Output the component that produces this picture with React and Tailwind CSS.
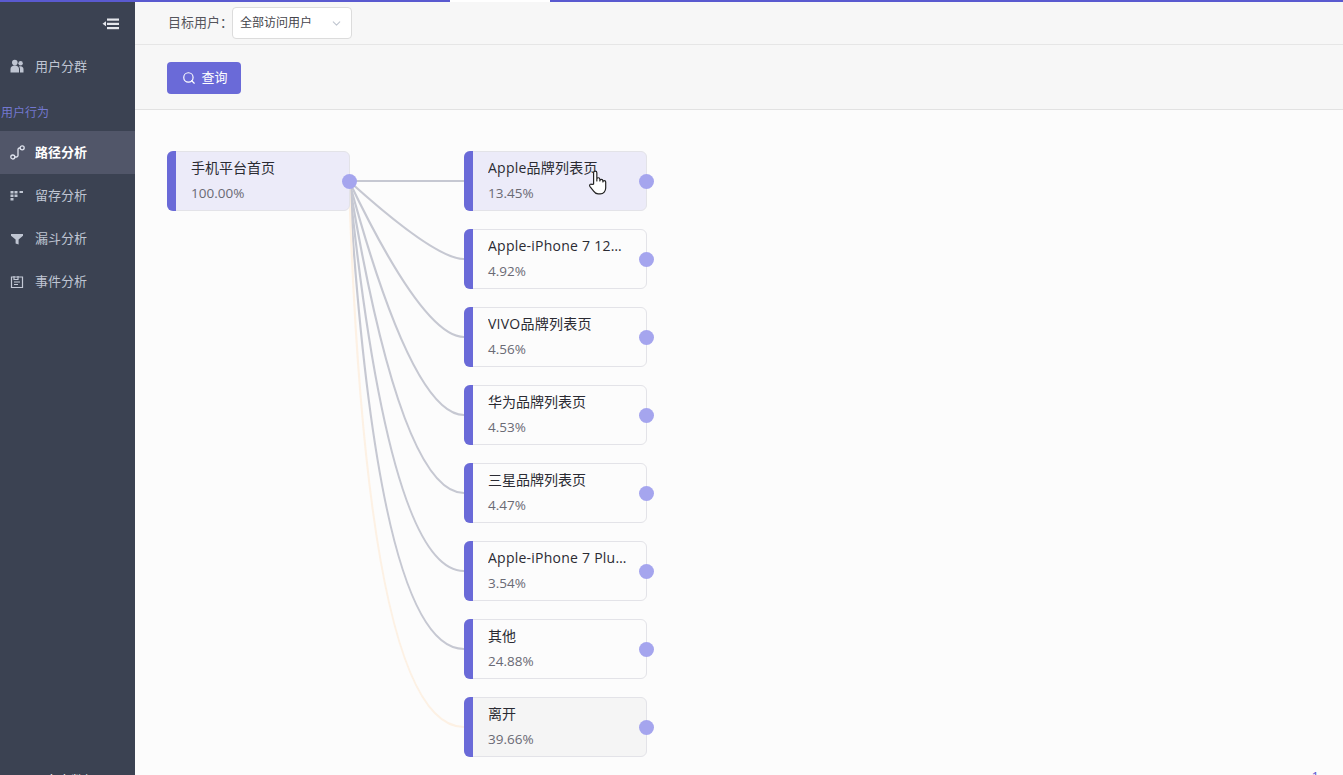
import { ChevronDown, Search } from 'lucide-react';

const font = { fontFamily: '"Open Sans", "Noto Sans CJK SC", sans-serif' };

const menu = [
  { label: '路径分析', icon: 'route', active: true },
  { label: '留存分析', icon: 'grid' },
  { label: '漏斗分析', icon: 'funnel' },
  { label: '事件分析', icon: 'event' },
];

const targets = [
  { title: 'Apple品牌列表页', pct: '13.45%', bg: 'bg-[#ecebf9]' },
  { title: 'Apple-iPhone 7 128GB 黑色', pct: '4.92%', bg: 'bg-[#fcfcfc]' },
  { title: 'VIVO品牌列表页', pct: '4.56%', bg: 'bg-[#fcfcfc]' },
  { title: '华为品牌列表页', pct: '4.53%', bg: 'bg-[#fcfcfc]' },
  { title: '三星品牌列表页', pct: '4.47%', bg: 'bg-[#fcfcfc]' },
  { title: 'Apple-iPhone 7 Plus 128GB', pct: '3.54%', bg: 'bg-[#fcfcfc]' },
  { title: '其他', pct: '24.88%', bg: 'bg-[#fcfcfc]' },
  { title: '离开', pct: '39.66%', bg: 'bg-[#f5f5f5]' },
];

function MenuIcon({ name }) {
  if (name === 'users') {
    return (
      <svg width="14" height="15" viewBox="0 0 14 15" fill="#bfc5d2">
        <circle cx="4.800" cy="3.600" r="2.800" />
        <circle cx="10.600" cy="4.200" r="2.200" />
        <path d="M.5 13.500V10c0-2.200 1.800-3.500 4.300-3.500S9 7.800 9 10v3.500z" />
        <path d="M10 13.500h3.500v-3.200c0-1.600-1.100-3-3-3-.6 0-1.100.1-1.500.3.700.7 1 1.500 1 2.400z" />
      </svg>
    );
  }
  if (name === 'route') {
    return (
      <svg width="15" height="15" viewBox="0 0 15 15" fill="none" stroke="#dfe3ee" strokeWidth="1.300">
        <circle cx="2.800" cy="12" r="2" />
        <circle cx="12.200" cy="2.800" r="2" />
        <path d="M4.800 12H6.500C7.500 12 8 11.500 8 10.500V4.500C8 3.500 8.500 3 9.500 3H10.200" />
      </svg>
    );
  }
  if (name === 'grid') {
    return (
      <svg width="14" height="14" viewBox="0 0 14 14" fill="#bfc5d2">
        <rect x="0.500" y="2" width="3" height="2.500" />
        <rect x="4.500" y="2" width="3" height="2.500" />
        <rect x="9.500" y="2" width="3.500" height="2" />
        <rect x="0.500" y="5.500" width="3" height="2.500" />
        <rect x="4.500" y="5.500" width="3" height="2.500" />
        <rect x="0.500" y="9" width="3" height="2.500" />
      </svg>
    );
  }
  if (name === 'funnel') {
    return (
      <svg width="14" height="14" viewBox="0 0 14 14" fill="#bfc5d2">
        <path d="M1 2h12v1.800L8.600 7.500v5L5.600 11.500V7.500L1 3.800z" />
      </svg>
    );
  }
  return (
    <svg width="14" height="14" viewBox="0 0 14 14" fill="none" stroke="#c4c9d6" strokeWidth="1.200">
      <path d="M1.500 2h11v10.500h-11z" />
      <path d="M4 1v3.500h4V1M4 7h6M4 9.500h4" />
    </svg>
  );
}

function Node({ title, pct, bg }) {
  const latin = /[a-z]/i.test(title);
  return (
    <div className={`relative flex h-[60px] w-[183px] shrink-0 rounded-[6px] border border-[#e3e3e8] ${bg}`}>
      <div className="-my-px -ml-px w-[9px] shrink-0 rounded-l-[6px] bg-[#6a6ad8]" />
      <div className="min-w-0 flex-1 pl-[15px] pr-[18px] pt-[5px]">
        <div className={`truncate text-[14px] leading-[22px] text-[#2b2b33] ${latin ? 'tracking-[0.24px]' : ''}`}>{title}</div>
        <div className="mt-[3px] text-[13.500px] leading-[22px] text-[#6a6a74]">{pct}</div>
      </div>
      <span className="absolute right-[-8px] top-[21.500px] h-[15px] w-[15px] rounded-full bg-[#a5a5ee]" />
    </div>
  );
}

function Edges() {
  const x0 = 182;
  const y0 = 30;
  const x1 = 297;
  return (
    <svg className="absolute left-0 top-0" width="500" height="640" fill="none">
      {targets.map((t, i) => {
        const y = 30 + i * 78;
        // the further down the target, the closer the bend sits to the source
        const cx = x0 + 115 * (0.85 - 0.1 * i);
        return (
          <path
            key={t.pct}
            d={i === 0 ? `M${x0} ${y0}H${x1}` : `M${x0} ${y0}Q${cx} ${y} ${x1} ${y}`}
            stroke={i === 7 ? '#fdf1e4' : '#c6c8d2'}
            strokeWidth="2.200"
          />
        );
      })}
    </svg>
  );
}

export default function App() {
  return (
    <div className="flex h-screen w-full overflow-hidden bg-[#fcfcfc] text-[13px]" style={font}>
      <aside className="flex w-[135px] shrink-0 flex-col border-t-2 border-[#5a5ad0] bg-[#3b4252]">
        <div className="flex h-[43px] items-center justify-end pr-[15px]">
          <svg width="18" height="14" viewBox="0 0 18 14" fill="#e4e6ec">
            <rect x="5" y="1.500" width="12" height="2.200" />
            <rect x="5" y="5.800" width="12" height="2.200" />
            <rect x="5" y="10" width="12" height="2.200" />
            <path d="M4 4.200v5L0.500 6.800z" />
          </svg>
        </div>
        <div className="flex h-[43px] items-center gap-[11px] pl-[10px] text-[#bfc5d2]">
          <MenuIcon name="users" />
          <span>用户分群</span>
        </div>
        <div className="flex h-[43px] items-center pl-px pt-[7px] text-[12px] text-[#7378d0]">用户行为</div>
        {menu.map((item) => (
          <div
            key={item.label}
            className={`flex h-[43px] shrink-0 items-center gap-[11px] pl-[10px] ${item.active ? 'bg-[#515669] font-bold text-white' : 'text-[#bfc5d2]'}`}
          >
            <MenuIcon name={item.icon} />
            <span className={item.icon === 'route' ? '-ml-px' : ''}>{item.label}</span>
          </div>
        ))}
        <div className="mt-auto h-[4px] overflow-hidden pl-[45px] text-[13px] leading-[18px] text-white">客户数据</div>
      </aside>

      <main className="relative flex min-w-0 flex-1 flex-col">
        <div className="flex h-[2px] shrink-0">
          <div className="w-[315px] bg-[#5a5ad0]" />
          <div className="w-[100px] bg-white" />
          <div className="flex-1 bg-[#5a5ad0]" />
        </div>
        <div className="flex h-[43px] shrink-0 items-center border-b border-[#e6e6e6] bg-[#f7f7f7] pl-[33px] text-[#55555c]">
          <span className="w-[64px] whitespace-nowrap">目标用户：</span>
          <div className="flex h-[32px] w-[120px] items-center justify-between rounded-[4px] border border-[#dcdcdc] bg-white pl-[7px] pr-[8px] text-[12px] text-[#44444c]">
            <span>全部访问用户</span>
            <ChevronDown size={13} className="text-[#c0c6d0]" />
          </div>
        </div>
        <div className="flex h-[65px] shrink-0 items-center border-b border-[#e2e2e2] bg-[#f7f7f7] pl-[32px] pt-[2px]">
          <button className="flex h-[32px] w-[74px] items-center justify-center gap-[5px] rounded-[4px] bg-[#6a6ad8] pl-[2px] text-[13px] text-white">
            <Search size={14} />
            <span>查询</span>
          </button>
        </div>
        <div className="relative flex-1 pl-[32px] pt-[41px]">
          <div className="relative flex items-start gap-[114px]">
            <Edges />
            <Node title="手机平台首页" pct="100.00%" bg="bg-[#ecebf9]" />
            <div className="flex flex-col gap-[18px]">
              {targets.map((t) => (
                <Node key={t.pct} {...t} />
              ))}
            </div>
          </div>
          <svg className="absolute left-[452px] top-[59px]" width="24" height="27" viewBox="0 0 22 25" fill="#fff" stroke="#222" strokeWidth="1.100" strokeLinejoin="round">
            <path d="M6 14V3.500a1.500 1.500 0 0 1 3 0V11V9.500a1.400 1.400 0 0 1 2.800 0V11a1.400 1.400 0 0 1 2.800 0v1a1.300 1.300 0 0 1 2.600 0v5.500c0 3-2 5.500-5 5.500h-2c-2 0-3.200-1-4.200-2.500L2.500 16c-.8-1.200.8-2.800 2-1.700z" />
          </svg>
        </div>
        <span className="absolute bottom-[-11px] right-[24px] text-[13px] text-[#5a5ad0]">1</span>
      </main>
    </div>
  );
}
